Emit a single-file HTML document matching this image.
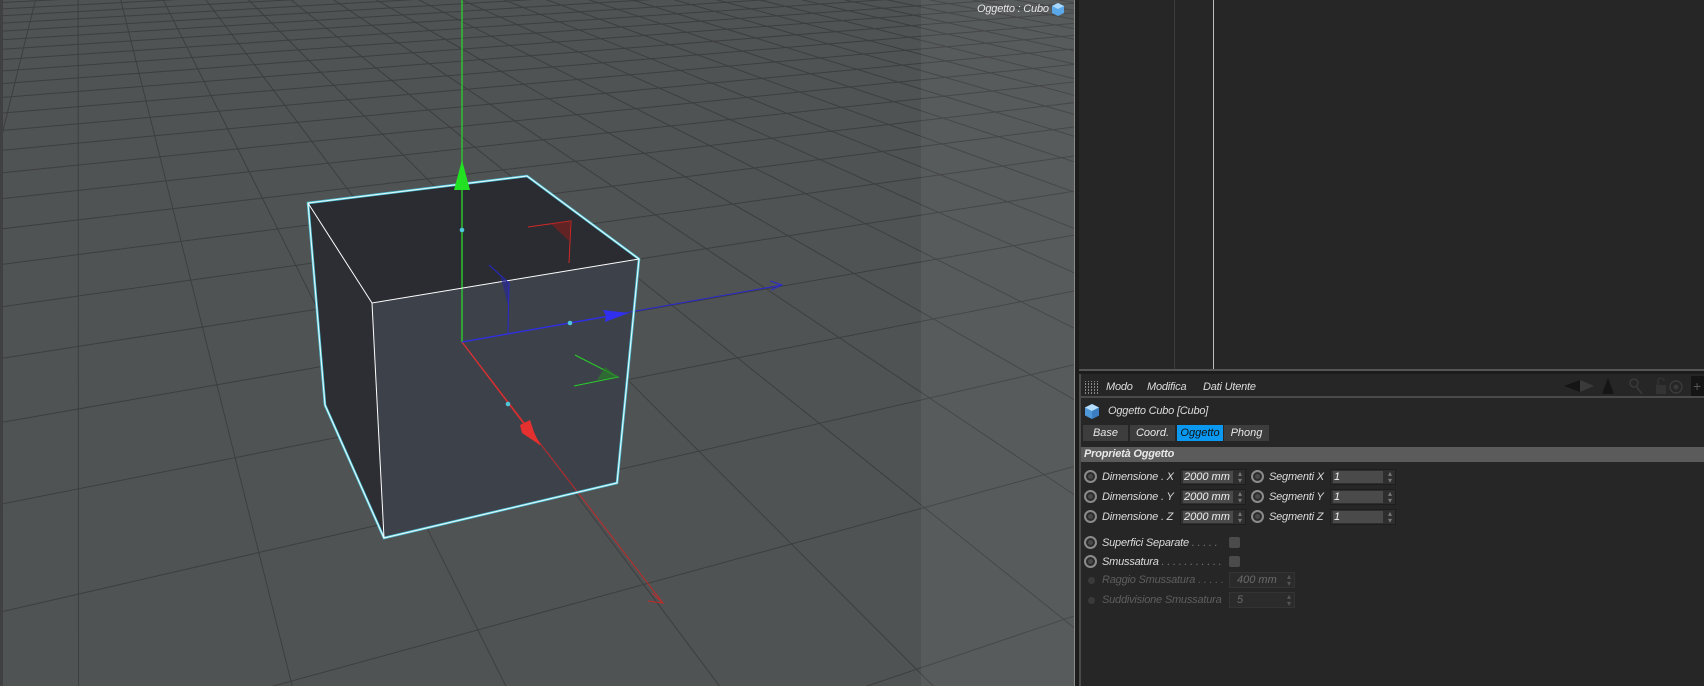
<!DOCTYPE html>
<html><head><meta charset="utf-8">
<style>
*{margin:0;padding:0;box-sizing:border-box}
html,body{width:1704px;height:686px;overflow:hidden;background:#262626;font-family:"Liberation Sans",sans-serif}
#vp{position:absolute;left:0;top:0;width:1074px;height:686px;background:#505354;overflow:hidden}
#vp svg{position:absolute;left:0;top:0}
.t{position:absolute;font-style:italic;font-size:11px;line-height:13px;color:#dcdcdc;white-space:nowrap;letter-spacing:-0.2px}
.ab{position:absolute}
.radio{position:absolute;width:13px;height:13px;border-radius:50%;background:#4a4a4a;border:2px solid #8a8a8a;box-shadow:inset 0 0 0 2px #2a2a2a}
.fld{position:absolute;height:16px;background:#2e2e2e;border:1px solid #1e1e1e}
.fld .in{position:absolute;left:2px;top:1px;bottom:1px;background:#4a4a4a;color:#eee;font-size:11px;font-style:italic;line-height:12px;padding-left:1px}
.fld .ar{position:absolute;right:3px;top:0px;color:#777;font-size:8px;line-height:7px}
.tab{position:absolute;top:425px;height:16px;background:#3d3d3d;color:#e8e8e8;font-size:11px;font-style:italic;line-height:16px;text-align:center}
.chk{position:absolute;width:11px;height:11px;background:#4b4b4b;border-radius:2px}
</style></head><body>
<div id="vp">
<svg width="1074" height="686" id="g">
<g id="grid" stroke="#3c3e3f" stroke-width="1" fill="none"></g>
<rect x="921" y="0" width="153" height="686" fill="#ffffff" opacity="0.05"/>
<rect x="0" y="0" width="3" height="686" fill="#3e4041"/>
<polygon points="308,203 527,176 639,259 372,303" fill="#2a2c31"/>
<polygon points="308,203 372,303 384,538 325,405" fill="#2c2e33"/>
<polygon points="372,303 639,259 617,483 384,538" fill="#3d414a"/>
<line x1="462" y1="342" x2="663" y2="603" stroke="#c02a2a" stroke-width="1"/>
<polyline points="652,593 663,603 648,601" stroke="#c02a2a" fill="none"/>
<line x1="462" y1="342" x2="782" y2="285" stroke="#2a2acc" stroke-width="1"/>
<polyline points="770,281 782,285 771,290" stroke="#2a2acc" fill="none"/>
<line x1="462" y1="0" x2="462" y2="342" stroke="#2fc02f" stroke-width="1.5"/>
<polygon points="308,203 527,176 639,259 617,483 384,538 325,405" fill="none" stroke="#4fc6da" stroke-width="2.5"/>
<polyline points="308,203 527,176 639,259 617,483 384,538 325,405 308,203" fill="none" stroke="#ffffff" stroke-width="1" opacity="0.9"/>
<polyline points="308,203 372,303 639,259" fill="none" stroke="#ffffff" stroke-width="1"/>
<line x1="372" y1="303" x2="384" y2="538" stroke="#ffffff" stroke-width="1"/>
<line x1="462" y1="342" x2="540" y2="445" stroke="#e03030" stroke-width="1.2"/>
<polygon points="520,425 530,420 534,432 540,445 522,433" fill="#e53030"/>
<line x1="462" y1="342" x2="610" y2="316" stroke="#3030e8" stroke-width="1.2"/>
<polygon points="603,310 629,313 605,322 606,316" fill="#3030ee"/>
<polygon points="462,160 454,190 470,190" fill="#22e022"/>
<circle cx="462" cy="230" r="2.3" fill="#4fc6da"/>
<circle cx="570" cy="323" r="2.3" fill="#4fc6da"/>
<circle cx="508" cy="404" r="2.3" fill="#4fc6da"/>
<polyline points="528,227 571,221 569,263" fill="none" stroke="#d02828" stroke-width="1"/>
<polygon points="551,224 571,221 569,241" fill="#7a2020" opacity="0.7"/>
<polyline points="489,265 509,283 508,333" fill="none" stroke="#2828d0" stroke-width="1"/>
<polygon points="500,275 509,283 508,305" fill="#2a2a90" opacity="0.7"/>
<polyline points="575,355 618,377 574,386" fill="none" stroke="#28d028" stroke-width="1"/>
<polygon points="605,367 618,377 597,380" fill="#2a7a2a" opacity="0.7"/>
</svg>
<div class="t" style="left:977px;top:3px;font-size:11px;color:#e6e6e6">Oggetto : Cubo</div>
<svg class="ab" style="left:1051px;top:2px" width="14" height="14"><polygon points="7,1 13,4 13,11 7,14 1,11 1,4" fill="#5aa8e8"/><polygon points="7,1 13,4 7,7 1,4" fill="#a8d8ff"/></svg>
</div>
<div class="ab" style="left:1074px;top:0;width:1px;height:686px;background:#8a8a8a"></div>
<div class="ab" style="left:1075px;top:0;width:4px;height:686px;background:#1c1c1c"></div>
<div class="ab" style="left:1174px;top:0;width:1px;height:370px;background:#3c3c3c"></div>
<div class="ab" style="left:1213px;top:0;width:1px;height:370px;background:#bdbdbd"></div>
<div class="ab" style="left:1079px;top:369px;width:625px;height:2px;background:#555"></div>
<div class="ab" style="left:1079px;top:371px;width:625px;height:3px;background:#1c1c1c"></div>
<div class="ab" style="left:1079px;top:374px;width:2px;height:312px;background:#4a4a4a"></div>
<svg class="ab" style="left:1085px;top:381px" width="13" height="13"><g fill="#888"><rect x="0" y="0" width="1" height="13"/><rect x="3" y="0" width="1" height="13"/><rect x="6" y="0" width="1" height="13"/><rect x="9" y="0" width="1" height="13"/><rect x="12" y="0" width="1" height="13"/></g><g fill="#262626"><rect x="0" y="1" width="13" height="1"/><rect x="0" y="4" width="13" height="1"/><rect x="0" y="7" width="13" height="1"/><rect x="0" y="10" width="13" height="1"/></g></svg>
<div class="t" style="left:1106px;top:381px">Modo</div>
<div class="t" style="left:1147px;top:381px">Modifica</div>
<div class="t" style="left:1203px;top:381px">Dati Utente</div>
<svg class="ab" style="left:1560px;top:375px" width="144" height="22">
<polygon points="4,11 20,5 20,17" fill="#151515"/><polygon points="20,5 34,11 20,17" fill="#3a3a3a"/>
<polygon points="48,3 42,19 54,19" fill="#151515"/>
<circle cx="74" cy="8" r="4" fill="none" stroke="#3a3a3a" stroke-width="1.5"/><line x1="76" y1="11" x2="82" y2="19" stroke="#3a3a3a" stroke-width="1.5"/>
<rect x="96" y="10" width="10" height="9" fill="#333"/><path d="M98 10 V6 a3 3 0 0 1 6 0" fill="none" stroke="#333" stroke-width="1.5"/>
<circle cx="116" cy="12" r="6" fill="none" stroke="#3a3a3a" stroke-width="1.5"/><circle cx="116" cy="12" r="2.5" fill="#3a3a3a"/>
<rect x="131" y="1" width="13" height="20" fill="#151515"/><text x="133" y="16" fill="#555" font-size="14" font-family="Liberation Sans">+</text>
</svg>
<div class="ab" style="left:1079px;top:396px;width:625px;height:2px;background:#4a4a4a"></div>
<svg class="ab" style="left:1084px;top:403px" width="16" height="17"><polygon points="8,1 15,4.5 15,12.5 8,16 1,12.5 1,4.5" fill="#4f98d8"/><polygon points="8,1 15,4.5 8,8 1,4.5" fill="#b5defd"/><polygon points="8,8 15,4.5 15,12.5 8,16" fill="#3b7fc0"/></svg>
<div class="t" style="left:1108px;top:405px">Oggetto Cubo [Cubo]</div>
<div class="tab" style="left:1083px;width:45px">Base</div>
<div class="tab" style="left:1130px;width:45px">Coord.</div>
<div class="tab" style="left:1177px;width:46px;background:#0a98f0;color:#111">Oggetto</div>
<div class="tab" style="left:1224px;width:45px">Phong</div>
<div class="ab" style="left:1081px;top:447px;width:623px;height:15px;background:#5b5b5b"></div>
<div class="t" style="left:1084px;top:448px;font-weight:bold;color:#e8e8e8">Proprietà Oggetto</div>

<div class="radio" style="left:1084px;top:470px"></div><div class="t" style="left:1102px;top:471px">Dimensione . X</div>
<div class="fld" style="left:1180px;top:469px;width:66px"><div class="in" style="width:50px">2000 mm</div><div class="ar">▴<br>▾</div></div>
<div class="radio" style="left:1251px;top:470px"></div><div class="t" style="left:1269px;top:471px">Segmenti X</div>
<div class="fld" style="left:1330px;top:469px;width:66px"><div class="in" style="width:50px">1</div><div class="ar">▴<br>▾</div></div>

<div class="radio" style="left:1084px;top:490px"></div><div class="t" style="left:1102px;top:491px">Dimensione . Y</div>
<div class="fld" style="left:1180px;top:489px;width:66px"><div class="in" style="width:50px">2000 mm</div><div class="ar">▴<br>▾</div></div>
<div class="radio" style="left:1251px;top:490px"></div><div class="t" style="left:1269px;top:491px">Segmenti Y</div>
<div class="fld" style="left:1330px;top:489px;width:66px"><div class="in" style="width:50px">1</div><div class="ar">▴<br>▾</div></div>

<div class="radio" style="left:1084px;top:510px"></div><div class="t" style="left:1102px;top:511px">Dimensione . Z</div>
<div class="fld" style="left:1180px;top:509px;width:66px"><div class="in" style="width:50px">2000 mm</div><div class="ar">▴<br>▾</div></div>
<div class="radio" style="left:1251px;top:510px"></div><div class="t" style="left:1269px;top:511px">Segmenti Z</div>
<div class="fld" style="left:1330px;top:509px;width:66px"><div class="in" style="width:50px">1</div><div class="ar">▴<br>▾</div></div>

<div class="radio" style="left:1084px;top:536px"></div><div class="t" style="left:1102px;top:537px">Superfici Separate <span style="color:#777">. . . . .</span></div>
<div class="chk" style="left:1229px;top:537px"></div>
<div class="radio" style="left:1084px;top:555px"></div><div class="t" style="left:1102px;top:556px">Smussatura<span style="color:#777"> . . . . . . . . . . .</span></div>
<div class="chk" style="left:1229px;top:556px"></div>

<div class="ab" style="left:1088px;top:577px;width:7px;height:7px;border-radius:50%;background:#3a3a3a"></div>
<div class="t" style="left:1102px;top:574px;color:#5e5e5e">Raggio Smussatura <span>. . . . .</span></div>
<div class="fld" style="left:1229px;top:572px;width:66px;background:#2b2b2b;border-color:#333"><div class="in" style="width:50px;background:transparent;color:#6a6a6a;padding-left:5px">400 mm</div><div class="ar" style="color:#555">▴<br>▾</div></div>
<div class="ab" style="left:1088px;top:597px;width:7px;height:7px;border-radius:50%;background:#3a3a3a"></div>
<div class="t" style="left:1102px;top:594px;color:#5e5e5e">Suddivisione Smussatura</div>
<div class="fld" style="left:1229px;top:592px;width:66px;background:#2b2b2b;border-color:#333"><div class="in" style="width:50px;background:transparent;color:#6a6a6a;padding-left:5px">5</div><div class="ar" style="color:#555">▴<br>▾</div></div>

<script>
(function(){
var g=document.getElementById('grid');
var V1=[78,-171],V2=[3400,-171],O=[462,342],a=0.107,b=0.0385;
function p(u,v){var d=a*u+b*v+1;return [(a*u*V1[0]+b*v*V2[0]+O[0])/d,(a*u*V1[1]+b*v*V2[1]+O[1])/d];}
var s='';
function ln(V,P){var dx=P[0]-V[0],dy=P[1]-V[1];var k=60;s+='<line x1="'+V[0]+'" y1="'+V[1]+'" x2="'+(V[0]+dx*k)+'" y2="'+(V[1]+dy*k)+'"/>';}
for(var k=-9;k<=160;k++){ln(V2,p(k,0));}
for(var k=-25;k<=160;k++){ln(V1,p(0,k));}
g.innerHTML=s;
})();
</script>
</body></html>
